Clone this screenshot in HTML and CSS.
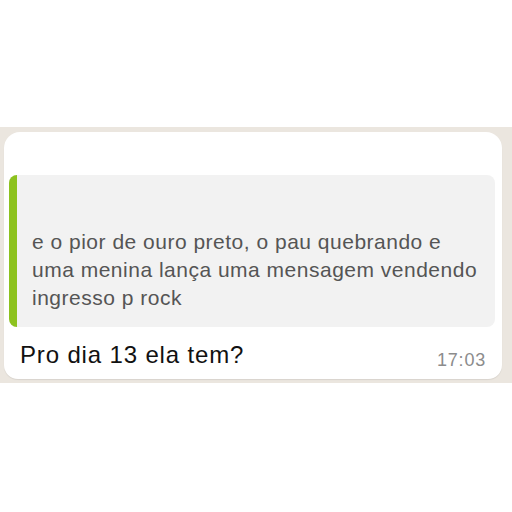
FILE: index.html
```html
<!DOCTYPE html>
<html lang="pt">
<head>
    <meta charset="UTF-8">
    <meta name="viewport" content="width=device-width, initial-scale=1.0">
    <title>Mensagem</title>
    <link rel="stylesheet" href="styles.css">
</head>
<body>
    <div class="wallpaper">
        <div class="bubble">
            <div class="quote">
                <div class="quote-bar"></div>
                <div class="quote-text">e o pior de ouro preto, o pau quebrando e<br>uma menina lança uma mensagem vendendo<br>ingresso p rock</div>
            </div>
            <div class="message">
                <span class="message-text">Pro dia 13 ela tem?</span>
                <span class="message-time">17:03</span>
            </div>
        </div>
    </div>
</body>
</html>
```

FILE: styles.css
```css
body {
    margin: 0;
    background-color: #ffffff;
    font-family: "Liberation Sans", Arial, sans-serif;
}
.wallpaper {
    margin-top: 127px;
    padding: 5px 10px 4px 4px;
    background-color: #ebe6df;
}
.bubble {
    background: white;
    border-radius: 16px 16px 14px 14px;
    padding: 43px 7px 0 5px;
    box-shadow: 0 1px 1px rgba(0,0,0,0.08);
}
.quote {
    display: flex;
    background-color: #f2f2f2;
    border-radius: 8px;
    overflow: hidden;
}
.quote-bar {
    width: 8px;
    flex-shrink: 0;
    background-color: #8dc21f;
}
.quote-text {
    padding: 53px 10px 15px 15px;
    font-size: 21px;
    letter-spacing: 0.5px;
    line-height: 28px;
    color: #555555;
    white-space: nowrap;
}
.message {
    display: flex;
    justify-content: space-between;
    align-items: flex-end;
    padding: 14px 9px 9px 11px;
}
.message-text {
    font-size: 24px;
    letter-spacing: 0.85px;
    line-height: 28px;
    margin-bottom: 1px;
    color: #111111;
}
.message-time {
    font-size: 18px;
    letter-spacing: 0.8px;
    line-height: 20px;
    color: #8c8c8c;
}
```
